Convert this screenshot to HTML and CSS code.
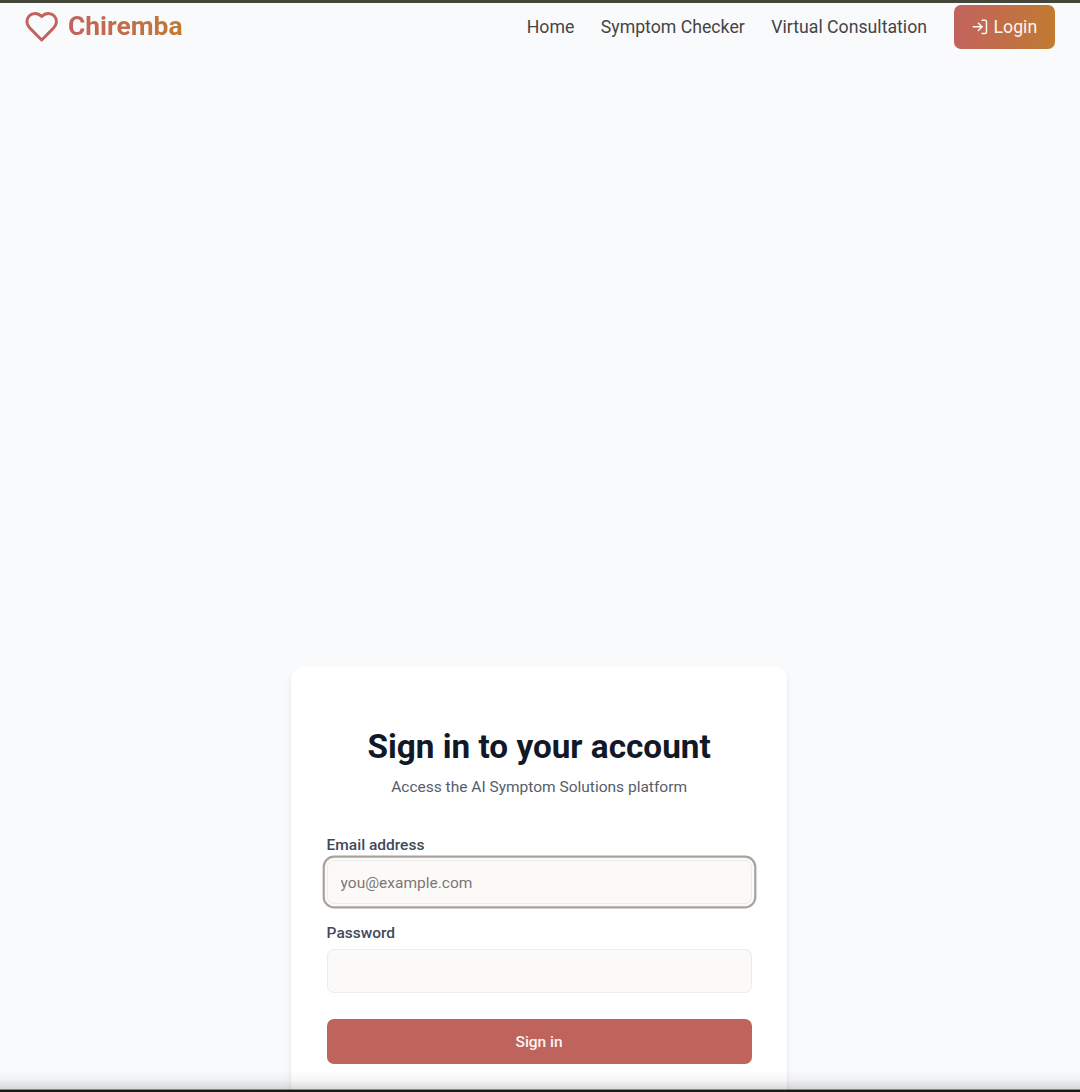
FILE: index.html
```html
<!DOCTYPE html>
<html lang="en">
<head>
<meta charset="utf-8">
<title>Chiremba</title>
<link rel="stylesheet" href="styles.css">
</head>
<body>
<div class="page">
  <header class="header">
    <a class="brand">
      <svg class="brand-icon" viewBox="0 0 24 24" fill="none" stroke="currentColor" stroke-width="2" stroke-linecap="round" stroke-linejoin="round"><path d="M19 14c1.49-1.46 3-3.21 3-5.5A5.5 5.5 0 0 0 16.5 3c-1.76 0-3 .5-4.5 2-1.5-1.5-2.74-2-4.5-2A5.5 5.5 0 0 0 2 8.5c0 2.3 1.5 4.05 3 5.5l7 7Z"/></svg>
      <span class="brand-name">Chiremba</span>
    </a>
    <nav class="nav">
      <a class="nav-home">Home</a>
      <a class="nav-checker">Symptom Checker</a>
      <a class="nav-consult">Virtual Consultation</a>
      <a class="login">
        <svg class="login-icon" viewBox="0 0 24 24" fill="none" stroke="currentColor" stroke-width="2" stroke-linecap="round" stroke-linejoin="round"><path d="M15 3h4a2 2 0 0 1 2 2v14a2 2 0 0 1-2 2h-4"/><path d="m10 17 5-5-5-5"/><path d="M15 12H3"/></svg>
        <span>Login</span>
      </a>
    </nav>
  </header>
  <main class="card">
    <h1 class="title">Sign in to your account</h1>
    <p class="subtitle">Access the AI Symptom Solutions platform</p>
    <form class="form">
      <label class="label" for="email">Email address</label>
      <input class="input input-active" id="email" type="email" placeholder="you@example.com">
      <label class="label" for="password">Password</label>
      <input class="input" id="password" type="password">
      <button class="submit" type="button">Sign in</button>
    </form>
  </main>
  <div class="bottom-edge"></div>
</div>
</body>
</html>
```
FILE: styles.css
```css
* { box-sizing: border-box; }
body { margin: 0; font-family: Roboto, "Liberation Sans", sans-serif; }

.page {
  position: relative;
  height: 1092px;
  overflow: hidden;
  border-top: 3px solid #45463a;
  background: #f9fafc;
  display: flex;
  flex-direction: column;
}

.header {
  flex: none;
  height: 48px;
  padding: 0 25px 0 24px;
  display: flex;
  align-items: center;
  justify-content: space-between;
}
.brand { display: flex; align-items: center; gap: 8.6px; color: #c1635e; }
.brand-icon { width: 35.4px; height: 35.4px; }
.brand-name {
  font-size: 26.4px;
  line-height: 36px;
  margin-bottom: 2px;
  font-weight: 700;
  background: linear-gradient(90deg, #c1635e, #c17a32);
  -webkit-background-clip: text;
  background-clip: text;
  color: transparent;
}
.nav { display: flex; align-items: center; gap: 26.5px; font-size: 17.7px; line-height: 27px; color: #454545; }
.login {
  width: 101.5px;
  height: 44px;
  border-radius: 7px;
  background: linear-gradient(90deg, #c1635e, #c17a32);
  color: #fdf5f1;
  display: flex;
  align-items: center;
  justify-content: center;
  gap: 4.5px;
}
.login-icon { width: 17.7px; height: 17.7px; }

.card {
  flex: none;
  width: 496px;
  height: 490px;
  margin: 614.5px 0 0 291px;
  padding: 61px 35.4px 0 35.6px;
  border-radius: 13px;
  background: #fff;
  box-shadow: 0 4px 7px -1px rgba(0,0,0,.1), 0 2px 4px -2px rgba(0,0,0,.1);
}
.title { margin: 0; text-align: center; font-size: 33.3px; line-height: 40px; font-weight: 700; color: #111827; }
.subtitle { margin: 9px 0 0; text-align: center; font-size: 15.5px; line-height: 22px; color: #555d6b; }
.form { margin-top: 36px; display: flex; flex-direction: column; }
.label { font-size: 15.5px; line-height: 22px; font-weight: 500; color: #414a5a; }
.input {
  height: 44px;
  width: 100%;
  margin: 4.9px 0 17.3px;
  padding: 2px 13px 0;
  border: 1px solid #ececea;
  border-radius: 7px;
  background: #fbfaf8;
  outline: none;
  font: 15.5px Roboto, "Liberation Sans", sans-serif;
}
.input::placeholder { color: #7b7773; opacity: 1; }
.input-active { box-shadow: 0 0 0 2.2px #fbfaf8, 0 0 0 4.4px #a8a29e; }
.submit {
  height: 44.6px;
  margin-top: 9.3px;
  padding: 2px 0 0;
  border: 0;
  border-radius: 7px;
  background: #bf635d;
  color: #fbf3f0;
  font: 500 15.5px Roboto, "Liberation Sans", sans-serif;
}

/* Shade above the dark window edge */
.bottom-edge {
  position: absolute;
  left: 0;
  right: 0;
  bottom: 0;
  height: 22px;
  border-bottom: 2px solid #171915;
  background: linear-gradient(rgba(0,0,0,0), rgba(0,0,0,.04) 50%, rgba(0,0,0,.14) 95%, rgba(0,0,0,.45) 95%);
}
```
